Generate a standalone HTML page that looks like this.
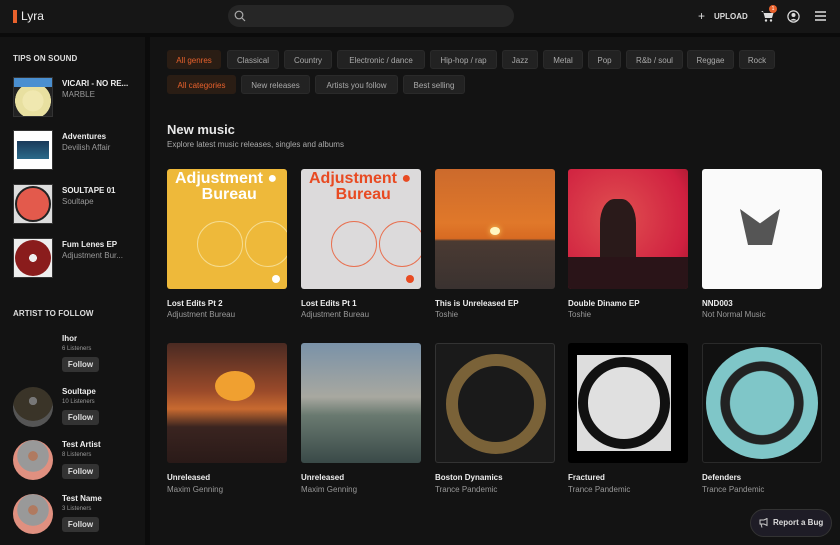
<!DOCTYPE html>
<html><head><meta charset="utf-8"><style>
*{box-sizing:border-box;margin:0;padding:0}
body{width:840px;height:545px;overflow:hidden;background:#0b0b0b;font-family:"Liberation Sans",sans-serif;color:#e8e8e8;position:relative}
.hdr{position:absolute;left:0;top:0;width:840px;height:33px;background:#161616}
.abs{position:absolute}
.side{position:absolute;left:0;top:37px;width:145px;height:508px;background:#131313}
.main{position:absolute;left:150px;top:37px;width:690px;height:508px;background:#131313}
.h{font-size:8px;font-weight:bold;color:#ddd;letter-spacing:.1px}
.th{position:absolute;width:40px;height:40px;left:13px;border:1px solid #333}
.tt{position:absolute;left:62px;font-size:8px;font-weight:bold;color:#eee}
.ts{position:absolute;left:62px;font-size:8px;color:#999}
.chip{position:absolute;height:19px;line-height:19px;font-size:8px;color:#aaa;background:#222;border:1px solid #2a2a2a;border-radius:3px;text-align:center}
.chip.on{background:#2a1d14;color:#e8612c;border-color:#2a1d14}
.card{position:absolute;width:120px;height:120px;border-radius:3px;overflow:hidden}
.ct{position:absolute;font-size:8px;font-weight:bold;color:#eee}
.cs{position:absolute;font-size:8px;color:#999}
.av{position:absolute;left:13px;width:40px;height:40px;border-radius:50%}
.fb{position:absolute;left:62px;width:37px;height:15px;background:#333;border-radius:3px;font-size:8px;font-weight:bold;color:#ddd;text-align:center;line-height:15px}
</style></head><body>
<div class="hdr">
 <div class="abs" style="left:13px;top:10px;width:4px;height:13px;background:#e8612c"></div>
 <div class="abs" style="left:21px;top:9px;font-size:12px;color:#eee">Lyra</div>
 <div class="abs" style="left:228px;top:5px;width:286px;height:22px;background:#262626;border-radius:11px"></div>
 <svg class="abs" style="left:234px;top:10px" width="12" height="12" viewBox="0 0 12 12"><circle cx="5" cy="5" r="3.8" fill="none" stroke="#aaa" stroke-width="1.2"/><path d="M8 8l3 3" stroke="#aaa" stroke-width="1.2"/></svg>
 <div class="abs" style="left:698px;top:9px;font-size:12px;color:#ddd">+</div>
 <div class="abs" style="left:714px;top:12px;font-size:8px;font-weight:bold;color:#ddd">UPLOAD</div>
 <svg class="abs" style="left:761px;top:10px" width="13" height="12" viewBox="0 0 13 12"><path d="M0 1h2l2 7h7l1.5-5H3" fill="#ddd"/><circle cx="5" cy="10.5" r="1.2" fill="#ddd"/><circle cx="10" cy="10.5" r="1.2" fill="#ddd"/></svg>
 <div class="abs" style="left:769px;top:5px;width:8px;height:8px;border-radius:50%;background:#e8612c;font-size:5px;text-align:center;line-height:8px;color:#fff">1</div>
 <svg class="abs" style="left:787px;top:10px" width="13" height="13" viewBox="0 0 13 13"><circle cx="6.5" cy="6.5" r="5.6" fill="none" stroke="#ddd" stroke-width="1.2"/><circle cx="6.5" cy="5" r="2" fill="#ddd"/><path d="M3 10.5q3.5-3.5 7 0" fill="#ddd"/></svg>
 <svg class="abs" style="left:815px;top:11px" width="11" height="10" viewBox="0 0 11 10"><path d="M0 1h11M0 5h11M0 9h11" stroke="#ddd" stroke-width="1.4"/></svg>
</div>

<div class="side">
 <div class="abs h" style="left:13px;top:17px">TIPS ON SOUND</div>
 <div class="th" style="top:40px;background:radial-gradient(circle at 50% 60%,#f0e8b0 0 35%,#e8e0a0 36% 60%,#222 61%);"><div style="height:9px;background:#4a8fd0"></div></div>
 <div class="tt" style="top:42px">VICARI - NO RE...</div><div class="ts" style="top:53px">MARBLE</div>
 <div class="th" style="top:93px;background:#fff"><div style="margin:10px 3px;height:18px;background:linear-gradient(#1a3a5a,#2a6a8a)"></div></div>
 <div class="tt" style="top:95px">Adventures</div><div class="ts" style="top:106px">Devilish Affair</div>
 <div class="th" style="top:147px;background:#ddd"><div style="margin:1px;width:36px;height:36px;border-radius:50%;background:#e35a4c;border:2px solid #222"></div></div>
 <div class="tt" style="top:149px">SOULTAPE 01</div><div class="ts" style="top:160px">Soultape</div>
 <div class="th" style="top:201px;background:#eee"><div style="margin:1px;width:36px;height:36px;border-radius:50%;background:radial-gradient(#eee 0 15%,#8a1c1c 16%)"></div></div>
 <div class="tt" style="top:203px">Fum Lenes EP</div><div class="ts" style="top:214px">Adjustment Bur...</div>

 <div class="abs h" style="left:13px;top:272px">ARTIST TO FOLLOW</div>
 <div class="tt" style="top:297px">Ihor</div><div class="ts" style="top:309px;font-size:6px">6 Listeners</div><div class="fb" style="top:320px">Follow</div>
 <div class="av" style="top:350px;background:radial-gradient(circle at 50% 35%,#777 0 12%,#3a3428 13% 60%,#555 61%)"></div>
 <div class="tt" style="top:350px">Soultape</div><div class="ts" style="top:362px;font-size:6px">10 Listeners</div><div class="fb" style="top:373px">Follow</div>
 <div class="av" style="top:403px;background:radial-gradient(circle at 50% 40%,#b07a60 0 15%,#999 16% 50%,#e09080 51%)"></div>
 <div class="tt" style="top:403px">Test Artist</div><div class="ts" style="top:415px;font-size:6px">8 Listeners</div><div class="fb" style="top:427px">Follow</div>
 <div class="av" style="top:457px;background:radial-gradient(circle at 50% 40%,#b07a60 0 15%,#999 16% 50%,#e09080 51%)"></div>
 <div class="tt" style="top:457px">Test Name</div><div class="ts" style="top:469px;font-size:6px">3 Listeners</div><div class="fb" style="top:480px">Follow</div>
</div>

<div class="main"></div>
<div class="chip on" style="left:167px;top:50px;width:54px">All genres</div>
<div class="chip" style="left:227px;top:50px;width:52px">Classical</div>
<div class="chip" style="left:284px;top:50px;width:48px">Country</div>
<div class="chip" style="left:337px;top:50px;width:88px">Electronic / dance</div>
<div class="chip" style="left:430px;top:50px;width:67px">Hip-hop / rap</div>
<div class="chip" style="left:502px;top:50px;width:36px">Jazz</div>
<div class="chip" style="left:543px;top:50px;width:40px">Metal</div>
<div class="chip" style="left:588px;top:50px;width:33px">Pop</div>
<div class="chip" style="left:626px;top:50px;width:57px">R&amp;b / soul</div>
<div class="chip" style="left:687px;top:50px;width:47px">Reggae</div>
<div class="chip" style="left:739px;top:50px;width:36px">Rock</div>
<div class="chip on" style="left:167px;top:75px;width:69px">All categories</div>
<div class="chip" style="left:241px;top:75px;width:69px">New releases</div>
<div class="chip" style="left:315px;top:75px;width:83px">Artists you follow</div>
<div class="chip" style="left:403px;top:75px;width:62px">Best selling</div>

<div class="abs" style="left:167px;top:122px;font-size:13px;font-weight:bold;color:#e8e8e8">New music</div>
<div class="abs" style="left:167px;top:140px;font-size:8px;color:#aaa">Explore latest music releases, singles and albums</div>

<div class="card" style="left:167px;top:169px;background:#eeb93a"><div style="position:absolute;left:8px;top:2px;font-size:16px;font-weight:bold;color:#fff;line-height:16px">Adjustment ●<br>&nbsp;&nbsp;&nbsp;&nbsp;&nbsp;&nbsp;Bureau</div><div style="position:absolute;left:30px;top:52px;width:46px;height:46px;border:1px solid #f5dc90;border-radius:50%"></div><div style="position:absolute;left:78px;top:52px;width:46px;height:46px;border:1px solid #f5dc90;border-radius:50%"></div><div style="position:absolute;left:105px;top:106px;width:8px;height:8px;border-radius:50%;background:#fff"></div></div>
<div class="card" style="left:301px;top:169px;background:#dcdadb"><div style="position:absolute;left:8px;top:2px;font-size:16px;font-weight:bold;color:#e84a22;line-height:16px">Adjustment ●<br>&nbsp;&nbsp;&nbsp;&nbsp;&nbsp;&nbsp;Bureau</div><div style="position:absolute;left:30px;top:52px;width:46px;height:46px;border:1px solid #e87050;border-radius:50%"></div><div style="position:absolute;left:78px;top:52px;width:46px;height:46px;border:1px solid #e87050;border-radius:50%"></div><div style="position:absolute;left:105px;top:106px;width:8px;height:8px;border-radius:50%;background:#e84a22"></div></div>
<div class="card" style="left:435px;top:169px;background:linear-gradient(#cc6a2c 0%,#e0782a 45%,#d86a22 58%,#4a3a32 60%,#3a3230 100%)"><div style="position:absolute;left:55px;top:58px;width:10px;height:8px;border-radius:50%;background:#fff6c0;box-shadow:0 0 6px #ffd060"></div></div>
<div class="card" style="left:568px;top:169px;background:radial-gradient(circle at 40% 40%,#e05050,#d02040 70%,#901828)"><div style="position:absolute;left:32px;top:30px;width:36px;height:60px;background:#2a1a1a;border-radius:40% 40% 0 0"></div><div style="position:absolute;left:0;top:88px;width:120px;height:32px;background:#2a1418"></div></div>
<div class="card" style="left:702px;top:169px;background:#fafafa"><div style="position:absolute;left:38px;top:40px;width:40px;height:36px;background:#555;clip-path:polygon(0 0,50% 40%,100% 0,80% 100%,20% 100%)"></div></div>

<div class="ct" style="left:167px;top:299px">Lost Edits Pt 2</div><div class="cs" style="left:167px;top:310px">Adjustment Bureau</div>
<div class="ct" style="left:301px;top:299px">Lost Edits Pt 1</div><div class="cs" style="left:301px;top:310px">Adjustment Bureau</div>
<div class="ct" style="left:435px;top:299px">This is Unreleased EP</div><div class="cs" style="left:435px;top:310px">Toshie</div>
<div class="ct" style="left:568px;top:299px">Double Dinamo EP</div><div class="cs" style="left:568px;top:310px">Toshie</div>
<div class="ct" style="left:702px;top:299px">NND003</div><div class="cs" style="left:702px;top:310px">Not Normal Music</div>

<div class="card" style="left:167px;top:343px;background:linear-gradient(#4a2a22,#9a4a2a 40%,#c86a30 55%,#3a2420 70%,#2a1a18)"><div style="position:absolute;left:48px;top:28px;width:40px;height:30px;border-radius:50%;background:#f0a030"></div></div>
<div class="card" style="left:301px;top:343px;background:linear-gradient(#7a92a8,#a8a8a0 45%,#6a7a70 60%,#3a4a48)"></div>
<div class="card" style="left:435px;top:343px;background:#1a1a1a;border:1px solid #333"><div style="position:absolute;left:10px;top:10px;width:100px;height:100px;border-radius:50%;border:12px solid #7a6238"></div></div>
<div class="card" style="left:568px;top:343px;background:#000"><div style="position:absolute;left:9px;top:12px;width:94px;height:96px;background:#ddd"></div><div style="position:absolute;left:10px;top:14px;width:92px;height:92px;border-radius:50%;border:10px solid #111;background:#e0e0e0"></div></div>
<div class="card" style="left:702px;top:343px;background:#111;border:1px solid #2a2a2a"><div style="position:absolute;left:3px;top:3px;width:112px;height:112px;border-radius:50%;background:radial-gradient(#7fc6c8 0 40%,#222 41% 52%,#7fc6c8 53% 85%,#222 86%)"></div></div>

<div class="ct" style="left:167px;top:473px">Unreleased</div><div class="cs" style="left:167px;top:485px">Maxim Genning</div>
<div class="ct" style="left:301px;top:473px">Unreleased</div><div class="cs" style="left:301px;top:485px">Maxim Genning</div>
<div class="ct" style="left:435px;top:473px">Boston Dynamics</div><div class="cs" style="left:435px;top:485px">Trance Pandemic</div>
<div class="ct" style="left:568px;top:473px">Fractured</div><div class="cs" style="left:568px;top:485px">Trance Pandemic</div>
<div class="ct" style="left:702px;top:473px">Defenders</div><div class="cs" style="left:702px;top:485px">Trance Pandemic</div>

<div class="abs" style="left:750px;top:509px;width:82px;height:28px;border-radius:14px;background:#1e1c26;border:1px solid #333"></div>
<svg class="abs" style="left:759px;top:518px" width="10" height="10" viewBox="0 0 10 10"><path d="M1 2h4l3-1.5v7L5 6H1zM2 6l1 3.5" fill="none" stroke="#ccc" stroke-width="1"/></svg>
<div class="abs" style="left:773px;top:518px;font-size:8px;font-weight:bold;color:#ddd">Report a Bug</div>
</body></html>
